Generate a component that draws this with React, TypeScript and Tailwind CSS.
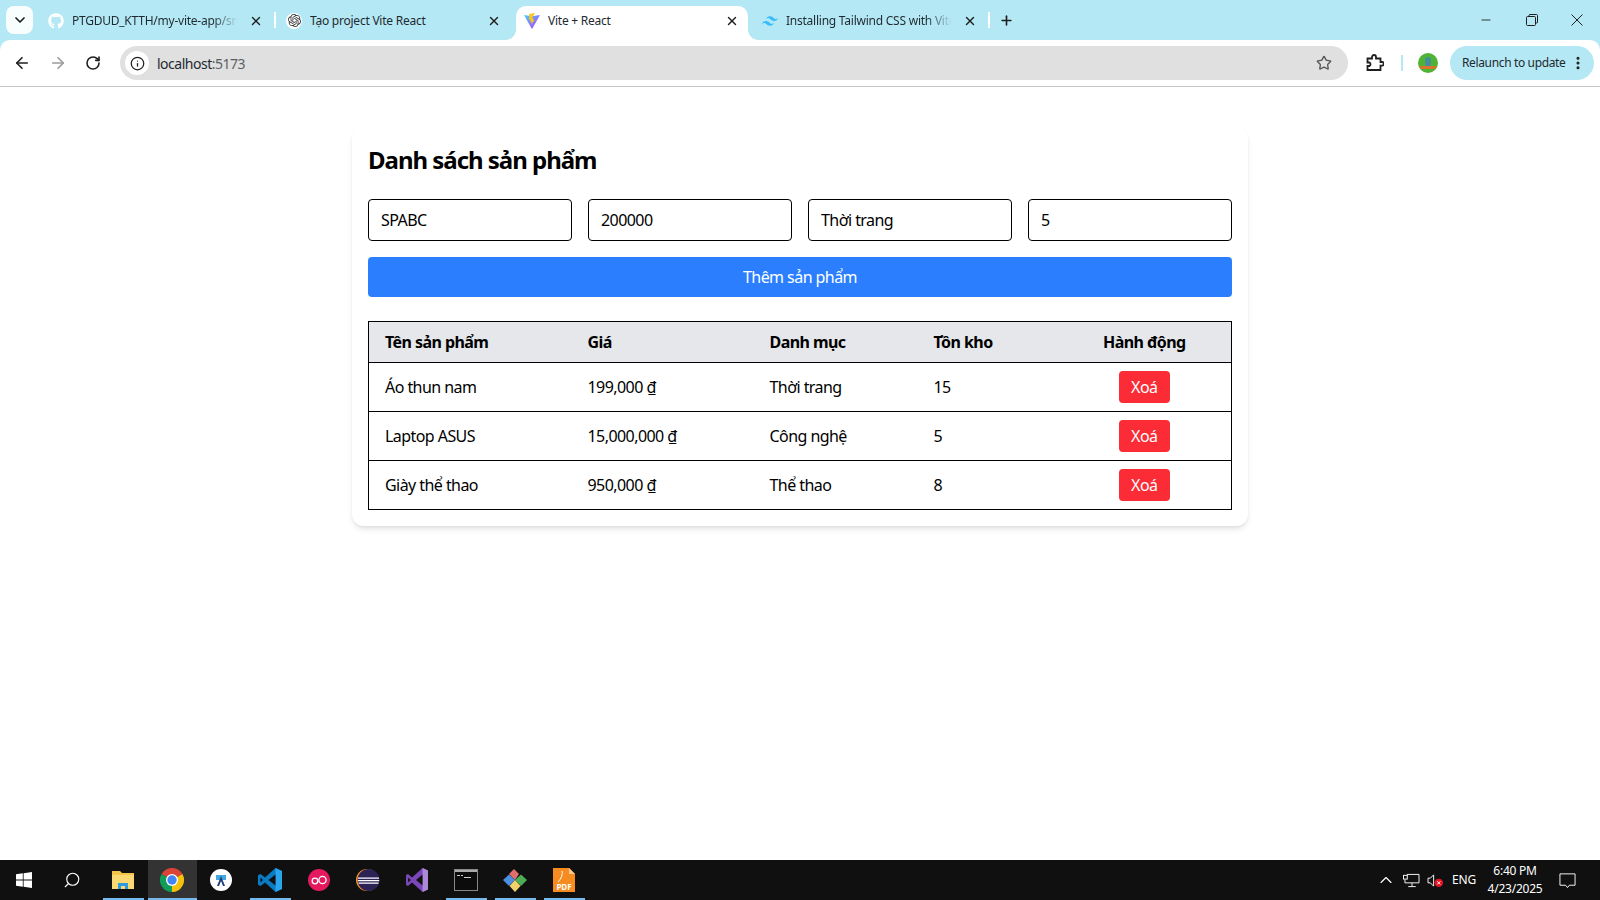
import React from "react";
import {
  ArrowLeft,
  ArrowRight,
  ChevronDown,
  ChevronUp,
  EllipsisVertical,
  Info,
  Minus,
  Plus,
  RotateCw,
  Search,
  Star,
  X,
} from "lucide-react";
import { FaGithub } from "react-icons/fa";
import { SiOpenai, SiTailwindcss } from "react-icons/si";

const products = [
  { name: "Áo thun nam", price: "199,000 ₫", category: "Thời trang", stock: 15 },
  { name: "Laptop ASUS", price: "15,000,000 ₫", category: "Công nghệ", stock: 5 },
  { name: "Giày thể thao", price: "950,000 ₫", category: "Thể thao", stock: 8 },
];

const formValues = ["SPABC", "200000", "Thời trang", "5"];

function ViteIcon() {
  return (
    <svg viewBox="0 0 24 24" className="w-4 h-4">
      <defs>
        <linearGradient id="viteBody" x1="0" y1="0" x2="1" y2="1">
          <stop offset="0" stopColor="#41d1ff" />
          <stop offset="1" stopColor="#bd34fe" />
        </linearGradient>
      </defs>
      <path d="M0 3 12 5 24 3 12.6 23.4c-.3.5-.9.5-1.2 0z" fill="url(#viteBody)" />
      <path d="M16.5 0 8 1.6 7.5 10.5l2.6-.5-.7 3.6 2.2-.5-.9 4.7L16 10l-2.7.5.9-3.2-2.6.4z" fill="#ffc517" />
    </svg>
  );
}

function Tab({
  icon,
  title,
  active,
  fade,
  separator,
}: {
  icon: React.ReactNode;
  title: string;
  active?: boolean;
  fade?: boolean;
  separator?: boolean;
}) {
  return (
    <div className="relative w-[238px] h-[34px] shrink-0">
      <div
        className={`flex items-center h-full mx-[3px] pl-[8px] pr-[8px] pb-[5px] rounded-t-[10px] ${
          active ? "bg-white" : ""
        }`}
      >
        <span className="flex items-center justify-center w-4 h-4 shrink-0">{icon}</span>
        <span
          className={`ml-[8px] w-[166px] overflow-hidden whitespace-nowrap text-[12px] tracking-[-0.02em] text-[#1f2a30] ${
            fade ? "[mask-image:linear-gradient(to_right,black_85%,transparent)]" : ""
          }`}
        >
          {title}
        </span>
        <X className="ml-[11px] w-[14px] h-[14px] text-[#1f1f1f] shrink-0" strokeWidth={2.4} />
      </div>
      {separator && <div className="absolute right-[-1px] top-[6px] w-[2px] h-[16px] bg-white" />}
      {active && (
        <>
          <div className="absolute left-[-7px] bottom-0 w-[10px] h-[10px] bg-[radial-gradient(circle_at_0_0,transparent_9.5px,white_10px)]" />
          <div className="absolute right-[-7px] bottom-0 w-[10px] h-[10px] bg-[radial-gradient(circle_at_100%_0,transparent_9.5px,white_10px)]" />
        </>
      )}
    </div>
  );
}

function TabStrip() {
  return (
    <div className="flex items-end h-[40px] bg-[#b5e8f5] shrink-0">
      <div className="flex items-center justify-center w-[27px] h-[28px] ml-[6px] mb-[6px] rounded-[8px] bg-white/90">
        <ChevronDown className="w-4 h-4 text-[#1f1f1f]" strokeWidth={2.6} />
      </div>
      <div className="flex ml-[4px]">
        <Tab
          fade
          separator
          title="PTGDUD_KTTH/my-vite-app/src"
          icon={
            <span className="flex items-center justify-center">
              <FaGithub className="w-4 h-4 text-white" />
            </span>
          }
        />
        <Tab
          title="Tạo project Vite React"
          icon={
            <span className="flex items-center justify-center w-4 h-4 rounded-full bg-white">
              <SiOpenai className="w-[13px] h-[13px] text-[#333]" />
            </span>
          }
        />
        <Tab active title="Vite + React" icon={<ViteIcon />} />
        <Tab
          fade
          separator
          title="Installing Tailwind CSS with Vite"
          icon={<SiTailwindcss className="w-4 h-4 text-[#38bdf8]" />}
        />
      </div>
      <div className="flex items-center justify-center w-[24px] h-[28px] ml-[5px] mb-[6px]">
        <Plus className="w-[15px] h-[15px] text-[#1f1f1f]" strokeWidth={2.6} />
      </div>
      <div className="flex ml-auto mb-[8px] h-[24px] items-center pr-[17px] gap-[33px]">
        <Minus className="w-[14px] h-[14px] text-[#1f1f1f]" strokeWidth={1.5} />
        <svg viewBox="0 0 12 12" className="w-[12px] h-[12px] text-[#1f1f1f]" fill="none" stroke="currentColor">
          <rect x="0.5" y="2.5" width="9" height="9" rx="1" />
          <path d="M3 2.5V1.5a1 1 0 0 1 1-1h6.5a1 1 0 0 1 1 1V8a1 1 0 0 1-1 1H9.5" />
        </svg>
        <svg viewBox="0 0 12 12" className="w-[12px] h-[12px] text-[#1f1f1f]" fill="none" stroke="currentColor">
          <path d="M.5.5l11 11M11.5.5l-11 11" />
        </svg>
      </div>
    </div>
  );
}

function Toolbar() {
  return (
    <div className="bg-[#b5e8f5] shrink-0">
      <div className="flex items-center h-[47px] bg-white rounded-t-[10px] border-b border-[#c6c6c6]">
        <div className="flex items-center pl-[13px] gap-[18px] w-[120px]">
          <ArrowLeft className="w-[18px] h-[18px] text-[#1f1f1f]" strokeWidth={2.2} />
          <ArrowRight className="w-[18px] h-[18px] text-[#9a9a9a]" strokeWidth={2.2} />
          <RotateCw className="w-[16px] h-[16px] text-[#1f1f1f]" strokeWidth={2.4} />
        </div>
        <div className="flex items-center w-[1228px] h-[34px] rounded-full bg-[#e0e0e0]">
          <span className="flex items-center justify-center w-[24px] h-[24px] ml-[5px] rounded-full bg-white">
            <Info className="w-[15px] h-[15px] text-[#1f1f1f]" strokeWidth={2} />
          </span>
          <span className="ml-[8px] text-[14px] tracking-[-0.035em] text-[#1f2a30]">
            localhost<span className="text-[#5b5f63]">:5173</span>
          </span>
          <Star className="ml-auto mr-[16px] w-[16px] h-[16px] text-[#555]" strokeWidth={2} />
        </div>
        <svg viewBox="0 0 18 18" className="ml-[18px] w-[18px] h-[18px] text-[#1f1f1f]" fill="none" stroke="currentColor" strokeWidth="1.8">
          <path d="M1.5 4.5H6V3a2 2 0 0 1 4 0v1.5h4.5V8H16a1.8 1.8 0 0 1 0 3.6h-1.500V16H1.500v-4H3.500a2 2 0 0 0 0-3.500H1.500z" />
        </svg>
        <div className="ml-[17px] w-[2px] h-[16px] bg-[#b5e8f5]" />
        <svg viewBox="0 0 20 20" className="ml-[15px] w-[20px] h-[20px]">
          <circle cx="10" cy="10" r="10" fill="#4fb336" />
          <path d="M1 13h18l-2 3H3z" fill="#d8742b" />
          <circle cx="10" cy="7" r="3" fill="#3f8f9e" />
          <rect x="7.500" y="9" width="5" height="4" fill="#4a86a8" />
        </svg>
        <div className="flex items-center ml-[12px] w-[144px] h-[34px] pl-[12px] rounded-full bg-[#b5e8f5]">
          <span className="text-[12px] tracking-[-0.03em] text-[#1f2a30] whitespace-nowrap">Relaunch to update</span>
          <EllipsisVertical className="ml-auto mr-[8px] w-[16px] h-[16px] text-[#1f1f1f]" strokeWidth={2.6} />
        </div>
      </div>
    </div>
  );
}

function ProductPage() {
  return (
    <main className="flex-1 bg-white overflow-hidden tracking-[-0.035em]">
      <div className="w-[896px] mx-auto mt-10 p-4 bg-white rounded-xl shadow-md">
        <h1 className="pt-[1px] mb-[23px] text-2xl font-bold tracking-[-0.0425em] text-black">Danh sách sản phẩm</h1>
        <div className="grid grid-cols-4 gap-4 mb-4">
          {formValues.map((value) => (
            <input
              key={value}
              readOnly
              value={value}
              className="w-full h-[42px] px-3 border border-black rounded text-base text-black"
            />
          ))}
        </div>
        <button className="w-full h-10 mb-6 rounded bg-blue-500 text-base text-white">Thêm sản phẩm</button>
        <table className="w-full table-fixed border-collapse border border-black text-base text-black">
          <thead>
            <tr className="h-[41px] bg-gray-200 border-b border-black">
              <th className="w-[203px] px-4 text-left font-bold">Tên sản phẩm</th>
              <th className="w-[182px] px-4 text-left font-bold">Giá</th>
              <th className="w-[164px] px-4 text-left font-bold">Danh mục</th>
              <th className="w-[140px] px-4 text-left font-bold">Tồn kho</th>
              <th className="px-4 text-center font-bold">Hành động</th>
            </tr>
          </thead>
          <tbody>
            {products.map((product) => (
              <tr key={product.name} className="h-[49px] border-b border-black">
                <td className="px-4">{product.name}</td>
                <td className="px-4">{product.price}</td>
                <td className="px-4">{product.category}</td>
                <td className="px-4">{product.stock}</td>
                <td className="px-4 text-center">
                  <button className="w-[51px] h-8 rounded bg-red-500 text-white align-middle">Xoá</button>
                </td>
              </tr>
            ))}
          </tbody>
        </table>
      </div>
    </main>
  );
}

function TaskItem({
  children,
  open,
  active,
  narrow,
}: {
  children: React.ReactNode;
  open?: boolean;
  active?: boolean;
  narrow?: boolean;
}) {
  return (
    <div
      className={`relative flex items-center justify-center h-full ${narrow ? "w-[48px]" : "w-[49px]"} ${
        active ? "bg-[#333333]" : ""
      }`}
    >
      {children}
      {open && <div className={`absolute bottom-0 h-[2px] bg-[#76b9ed] ${active ? "inset-x-0" : "inset-x-[4px]"}`} />}
    </div>
  );
}

function Taskbar() {
  return (
    <div className="flex items-center h-[40px] bg-[#101010] shrink-0">
      <TaskItem narrow>
        <svg viewBox="0 0 16 16" className="w-4 h-4 text-white" fill="currentColor">
          <path d="M0 2.300 6.800 1.300V7.600H0zM7.600 1.200 16 0V7.600H7.600zM0 8.400H6.800V14.700L0 13.700zM7.600 8.400H16V16L7.600 14.800z" />
        </svg>
      </TaskItem>
      <TaskItem narrow>
        <Search className="w-[18px] h-[18px] text-white -scale-x-100" strokeWidth={1.5} />
      </TaskItem>
      <div className="flex items-center h-full ml-[2.5px]">
        <TaskItem open>
          <svg viewBox="0 0 22 22" className="w-[22px] h-[22px]">
            <path d="M0 2h8l2 2h12v16H0z" fill="#f5c549" />
            <rect x="0" y="6" width="22" height="14" fill="#fbd872" />
            <path d="M6 20v-6h10v6h-3v-3H9v3z" fill="#2e9be0" />
          </svg>
        </TaskItem>
        <TaskItem open active>
          <svg viewBox="0 0 24 24" className="w-6 h-6">
            <path d="M12 12 1.600 6A12 12 0 0 1 22.400 6z" fill="#db4437" />
            <path d="M12 12 22.400 6A12 12 0 0 1 12 24z" fill="#f4c20d" />
            <path d="M12 12 12 24A12 12 0 0 1 1.600 6z" fill="#0f9d58" />
            <circle cx="12" cy="12" r="6" fill="#fff" />
            <circle cx="12" cy="12" r="4.700" fill="#4285f4" />
          </svg>
        </TaskItem>
        <TaskItem>
          <svg viewBox="0 0 22 22" className="w-[22px] h-[22px]">
            <circle cx="11" cy="11" r="11" fill="#fff" />
            <path d="M6 6h10v5H6z" fill="#3fa9e0" />
            <path d="M11 7 7 17h2l2-5 2 5h2z" fill="#1f3f7a" />
          </svg>
        </TaskItem>
        <TaskItem open>
          <svg viewBox="0 0 24 24" className="w-6 h-6">
            <path d="M17.500 0 24 3v18l-6.500 3L7 14.500 2.500 18 0 16.700V7.300L2.500 6 7 9.500z" fill="#0a7cc4" />
            <path d="M17.500 0 24 3v18l-6.500 3z" fill="#2aa4ea" />
            <path d="M17.500 6.500v11L10.500 12z" fill="#101010" />
            <path d="M2.500 9.500v5L5 12z" fill="#101010" />
          </svg>
        </TaskItem>
        <TaskItem>
          <svg viewBox="0 0 22 22" className="w-[22px] h-[22px]" fill="none">
            <circle cx="11" cy="11" r="11" fill="#e5195f" />
            <circle cx="7" cy="12" r="2.800" stroke="#fff" strokeWidth="1.300" />
            <circle cx="14.500" cy="11" r="3.600" stroke="#fff" strokeWidth="1.300" />
          </svg>
        </TaskItem>
        <TaskItem>
          <svg viewBox="0 0 24 24" className="w-6 h-6">
            <circle cx="11" cy="12" r="11" fill="#f7941e" />
            <circle cx="12.500" cy="12" r="11" fill="#2c2255" />
            <path d="M2 9.500h21v1.300H2zM1.800 12h21.400v1.300H1.800zM2.500 14.500h20v1.300h-20z" fill="#fff" />
          </svg>
        </TaskItem>
        <TaskItem>
          <svg viewBox="0 0 24 24" className="w-6 h-6">
            <path d="M17.500 0 23 2.500v19L17.500 24 7 14.500 3 18l-2-1V7l2-1 4 3.500z" fill="#7b46b9" />
            <path d="M17.500 0 23 2.500v19L17.500 24z" fill="#a98ad6" />
            <path d="M17.500 6.500v11L11 12z" fill="#101010" />
            <path d="M3.200 9.500v5L5.800 12z" fill="#101010" />
          </svg>
        </TaskItem>
        <TaskItem open>
          <svg viewBox="0 0 24 24" className="w-6 h-6">
            <rect x="0.500" y="1.500" width="23" height="21" fill="#0c0c0c" stroke="#888" />
            <rect x="1" y="2" width="22" height="2" fill="#aaa" />
            <path d="M3 7h3v1H3zM7 7h2v1H7zM10 9h7v1h-7z" fill="#ccc" />
          </svg>
        </TaskItem>
        <TaskItem open>
          <svg viewBox="0 0 24 24" className="w-6 h-6">
            <path d="M12 12 6 6l5-5 5 5z" fill="#e26d6d" />
            <path d="M6 6.500 12 12 6 18 0 12z" fill="#4c8fe0" />
            <path d="M18 6.500 24 12 18 18 12 12z" fill="#4cae54" />
            <path d="M12 12l5.500 6-5.500 6-5.500-6z" fill="#f1d26a" />
          </svg>
        </TaskItem>
        <TaskItem open>
          <svg viewBox="0 0 24 24" className="w-6 h-6">
            <path d="M1 0h16l6 6v18H1z" fill="#f68b1f" />
            <path d="M17 0v6h6z" fill="#fbc78f" />
            <path d="M6 14c3-3 5-8 4-11" stroke="#fff" strokeWidth="1" fill="none" />
            <text x="12" y="21.500" textAnchor="middle" fontSize="8" fontWeight="700" fill="#fff">
              PDF
            </text>
          </svg>
        </TaskItem>
      </div>
      <div className="flex items-center h-full ml-auto text-white">
        <ChevronUp className="w-[20px] h-[20px]" strokeWidth={1.4} />
        <svg viewBox="0 0 18 16" className="ml-[7px] w-[17px] h-[15px]" fill="none" stroke="currentColor">
          <path d="M4 1.500h13v9H2M2 10.500V7M9.500 10.500v3.500M5.500 14.500h8" />
          <rect x="0.500" y="2.500" width="4" height="4" />
        </svg>
        <svg viewBox="0 0 18 16" className="ml-[7px] w-[17px] h-[15px]">
          <path d="M1 5.500h2.500L7 2v12l-3.500-3.500H1z" fill="none" stroke="currentColor" />
          <circle cx="12.500" cy="10.500" r="4.500" fill="#e81123" />
          <path d="M10.800 8.800l3.400 3.400M14.200 8.800l-3.400 3.400" stroke="#fff" />
        </svg>
        <span className="ml-[8px] w-[24px] text-[12px] tracking-[-0.01em]">ENG</span>
        <div className="ml-[8px] w-[62px] text-center text-[12px] leading-[18px] tracking-[-0.02em]">
          <div>6:40 PM</div>
          <div>4/23/2025</div>
        </div>
        <svg viewBox="0 0 18 18" className="ml-[13px] mr-[24px] w-[17px] h-[17px]" fill="none" stroke="currentColor">
          <path d="M1 2h16v12h-6l-2 2.500L7 14H1z" />
        </svg>
      </div>
    </div>
  );
}

export default function App() {
  return (
    <div className="flex flex-col h-screen font-['Noto_Sans','Liberation_Sans',sans-serif]">
      <TabStrip />
      <Toolbar />
      <ProductPage />
      <Taskbar />
    </div>
  );
}
